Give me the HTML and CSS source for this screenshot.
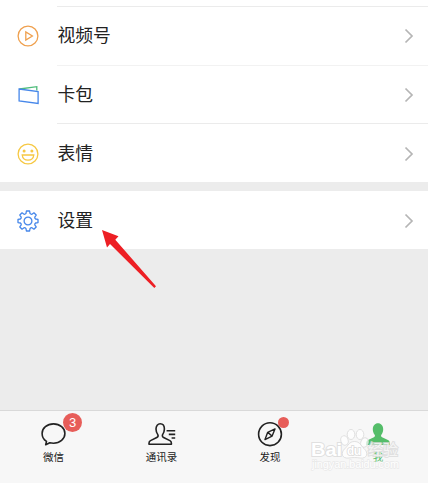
FILE: index.html
```
<!DOCTYPE html>
<html lang="zh-CN">

<head>
    <meta charset="UTF-8">
    <meta name="viewport" content="width=device-width, initial-scale=1.0">
    <title>我</title>
    <link rel="stylesheet" href="styles.css">
</head>

<body>
    <div class="page">
        <ul class="list list-top">
            <li class="cell">
                <svg class="icon" viewBox="-12 -12 24 24" stroke="#efa04e">
                    <circle r="9.9" />
                    <path d="M-2.2 -4.1V4.1L4.4 0Z" />
                </svg>
                <span class="name">视频号</span>
                <svg class="arrow" viewBox="0 0 10 16"><path d="M1.5 1.5L8 8L1.5 14.5" /></svg>
            </li>
            <li class="cell">
                <svg class="icon" viewBox="-12 -12 24 24" stroke="#4687ea">
                    <path d="M-8.5 -6L8.8 -8.3V-4.5" stroke="#4fbd7b" />
                    <path d="M-8.9 -6L10.1 -3.4V8.4L-8.9 6Z" />
                </svg>
                <span class="name">卡包</span>
                <svg class="arrow" viewBox="0 0 10 16"><path d="M1.5 1.5L8 8L1.5 14.5" /></svg>
            </li>
            <li class="cell">
                <svg class="icon" viewBox="-12 -12 24 24" stroke="#f6c843">
                    <circle r="9.9" />
                    <circle cx="-3.9" cy="-3" r="1.5" fill="#f6c843" stroke="none" />
                    <circle cx="3.9" cy="-3" r="1.5" fill="#f6c843" stroke="none" />
                    <path d="M-5.8 1H5.8C5.4 4.4 3.2 6.2 0 6.2S-5.4 4.4 -5.8 1Z" />
                </svg>
                <span class="name">表情</span>
                <svg class="arrow" viewBox="0 0 10 16"><path d="M1.5 1.5L8 8L1.5 14.5" /></svg>
            </li>
        </ul>

        <ul class="list">
            <li class="cell">
                <svg class="icon" viewBox="-12 -12 24 24" stroke="#4687ea" stroke-linejoin="round">
                    <circle r="3.9" />
                    <path d="M-1.6 -10H1.6L2 -7.6Q3 -6.4 3.96 -6.79L5.94 -8.2L8.2 -5.94L6.79 -3.96Q6.4 -3 7.6 -2L10 -1.6V1.6L7.6 2Q6.4 3 6.79 3.96L8.2 5.94L5.94 8.2L3.96 6.79Q3 6.4 2 7.6L1.6 10H-1.6L-2 7.6Q-3 6.4 -3.96 6.79L-5.94 8.2L-8.2 5.94L-6.79 3.96Q-6.4 3 -7.6 2L-10 1.6V-1.6L-7.6 -2Q-6.4 -3 -6.79 -3.96L-8.2 -5.94L-5.94 -8.2L-3.96 -6.79Q-3 -6.4 -2 -7.6Z" />
                </svg>
                <span class="name">设置</span>
                <svg class="arrow" viewBox="0 0 10 16"><path d="M1.5 1.5L8 8L1.5 14.5" /></svg>
                <!-- 红色箭头，指向设置 -->
                <svg class="pointer" viewBox="0 0 56 60"><path d="M1 1L17.5 7.2L14.3 10.7L55 57.3L53.3 59L9 15L6 18.5Z" /></svg>
            </li>
        </ul>

        <!-- 底部导航 -->
        <nav class="tabbar">
            <a class="tab">
                <svg class="tab-icon" viewBox="0 0 28 26">
                    <path d="M13.5 2.9C7.1 2.9 2.1 7.1 2.1 12.5C2.1 15.9 3.8 18.7 6.5 20.4L5.7 23.7L9.8 21.8C11 22.1 12.2 22.2 13.5 22.2C19.9 22.2 24.9 17.9 24.9 12.5S19.9 2.9 13.5 2.9Z" />
                </svg>
                <span class="badge">3</span>
                <span>微信</span>
            </a>
            <a class="tab">
                <svg class="tab-icon" viewBox="0 0 28 26">
                    <path d="M8 8C8 4.8 9.8 2.8 12.2 2.8S16.4 4.8 16.4 8C16.4 10.6 15.4 12.4 14.6 13.6C14.1 14.6 14.4 15.9 15.6 16.5L21.9 19.6C23 20.2 23.4 20.9 23.4 22.3V23.2H1V22.3C1 20.9 1.4 20.2 2.5 19.6L8.8 16.5C10 15.9 10.3 14.6 9.8 13.6C9 12.4 8 10.6 8 8Z" />
                    <path d="M18.6 9.8H27.2M20.8 13.4H27.2M23.6 17H27.2" />
                </svg>
                <span>通讯录</span>
            </a>
            <a class="tab">
                <svg class="tab-icon" viewBox="0 0 28 26">
                    <circle cx="14" cy="13.2" r="11.4" />
                    <path d="M19 7.9L16.1 15.1L9 18.6L11.7 11.3ZM11.7 11.3L16.1 15.1" stroke-width="1.4" />
                </svg>
                <span class="dot"></span>
                <span>发现</span>
            </a>
            <a class="tab active">
                <svg class="tab-icon" viewBox="0 0 28 26">
                    <path d="M8.8 8.2C8.8 4.6 11 2.2 14 2.2S19.2 4.6 19.2 8.2C19.2 10.8 18.2 12.7 17.3 13.8C16.8 14.8 17 15.6 18.1 16.2L23.9 19C25.2 19.7 25.8 20.8 25.8 22.4V24H2.2V22.4C2.2 20.8 2.8 19.7 4.1 19L9.9 16.2C11 15.6 11.2 14.8 10.7 13.8C9.8 12.7 8.8 10.8 8.8 8.2Z" />
                </svg>
                <span>我</span>
            </a>
        </nav>

        <!-- 水印 -->
        <svg class="watermark" viewBox="0 0 94 46">
            <g class="paw">
                <ellipse cx="36.5" cy="13.5" rx="3.7" ry="4.8" transform="rotate(-15 36.5 13.5)" />
                <ellipse cx="43" cy="7.5" rx="3.8" ry="5" />
                <ellipse cx="52" cy="7.5" rx="3.8" ry="5" />
                <ellipse cx="56.5" cy="15.5" rx="3.7" ry="4.8" transform="rotate(20 56.5 15.5)" />
                <path d="M46.5 14.5C41 14.5 40 19 37 21.5C32 26 34 32 41 31C44.5 30.4 48.5 30.4 52 31C59 32 61 26 56 21.5C53 19 52 14.5 46.5 14.5Z" />
            </g>
            <text class="brand" x="3" y="29" textLength="31" lengthAdjust="spacingAndGlyphs">Bai</text>
            <text class="du" x="39" y="28" textLength="14">du</text>
            <text class="brand cn" x="60" y="28" textLength="30">经验</text>
            <text class="site" x="4" y="41" textLength="87" lengthAdjust="spacingAndGlyphs">jingyan.baidu.com</text>
        </svg>
    </div>
</body>

</html>
```
FILE: styles.css
```
* {
    box-sizing: border-box;
}

body {
    margin: 0;
    font-family: "Liberation Sans", "Noto Sans CJK SC", sans-serif;
    color: #222;
}

.page {
    position: relative;
    display: flex;
    flex-direction: column;
    height: 483px;
    background: #ececec;
    overflow: hidden;
}

.list {
    margin: 0 0 9px;
    padding: 0;
    list-style: none;
    background: #fff;
}

.list-top {
    padding-top: 6px;
}

.cell {
    position: relative;
    display: flex;
    align-items: center;
    height: 58px;
    padding: 2px 14px 0 16px;
}

.list-top .cell {
    height: 58.67px;
}

/* 分割线，从文字左边开始 */
.list-top .cell::before {
    content: "";
    position: absolute;
    top: 0;
    left: 57px;
    right: 0;
    height: 1px;
    background: #ebebeb;
}

.list-top .cell:nth-child(2)::before {
    background: #f2f2f2;
}

.icon {
    width: 24px;
    height: 24px;
    margin: 0 17.2px 0 .3px;
    fill: none;
    stroke-width: 1.3;
}

.name {
    flex: 1;
    font-size: 17.8px;
    line-height: 26px;
}

.arrow {
    width: 10px;
    height: 16px;
    fill: none;
    stroke: #b5b5b5;
    stroke-width: 1.7;
}

.pointer {
    position: absolute;
    left: 101px;
    top: 38px;
    z-index: 1;
    width: 56px;
    height: 60px;
    fill: #ed1f24;
}

.tabbar {
    display: grid;
    grid-template-columns: 107px 109px 108px 108px;
    height: 73px;
    margin-top: auto;
    border-top: 1px solid #d9d9d9;
    background: #f7f7f7;
}

.tab {
    position: relative;
    display: flex;
    flex-direction: column;
    align-items: center;
    padding-top: 10px;
    font-size: 10.5px;
    line-height: 16px;
}

.tab-icon {
    width: 28px;
    height: 26px;
    margin-bottom: 2px;
    fill: none;
    stroke: #222;
    stroke-width: 1.6;
    stroke-linejoin: round;
}

.active {
    color: #54bd69;
}

.active .tab-icon {
    fill: #54bd69;
    stroke: none;
}

.badge {
    position: absolute;
    left: 63px;
    top: 2px;
    width: 19px;
    height: 19px;
    border-radius: 50%;
    background: #e75d59;
    color: #fff;
    font-size: 13px;
    line-height: 19px;
    text-align: center;
}

.dot {
    position: absolute;
    left: 62px;
    top: 6px;
    width: 11px;
    height: 11px;
    border-radius: 50%;
    background: #e75d59;
}

.watermark {
    position: absolute;
    left: 308px;
    top: 427px;
    width: 94px;
    height: 46px;
    fill: #fff;
    fill-opacity: 0.7;
    stroke: #dadada;
    stroke-opacity: 0.8;
    stroke-width: 1;
}

.watermark text {
    font-weight: bold;
    paint-order: stroke;
}

.watermark .brand {
    font-size: 19px;
    fill-opacity: 1;
    stroke-width: 2;
}

.watermark .cn {
    font-size: 15px;
    font-weight: normal;
    fill-opacity: 0.7;
}

.watermark .du {
    font-size: 12px;
    fill-opacity: 1;
    stroke-width: 1.5;
    stroke: #d0d0d0;
}

.watermark .site {
    font-size: 11px;
    font-weight: normal;
    fill-opacity: 1;
    stroke: #e6e6e6;
    stroke-width: 1.4;
}
```
